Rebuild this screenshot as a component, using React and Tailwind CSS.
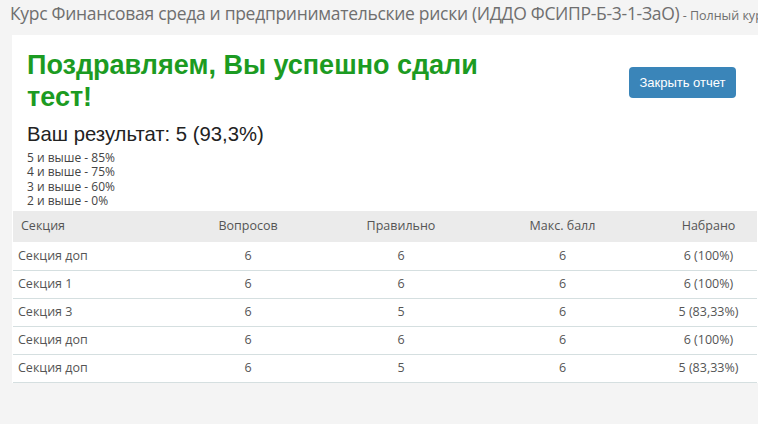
import React from "react";

const rows = [
  { name: "Секция доп", total: 6, right: 6, max: 6, score: "6 (100%)" },
  { name: "Секция 1", total: 6, right: 6, max: 6, score: "6 (100%)" },
  { name: "Секция 3", total: 6, right: 5, max: 6, score: "5 (83,33%)" },
  { name: "Секция доп", total: 6, right: 6, max: 6, score: "6 (100%)" },
  { name: "Секция доп", total: 6, right: 5, max: 6, score: "5 (83,33%)" },
];

const grades = ["5 и выше - 85%", "4 и выше - 75%", "3 и выше - 60%", "2 и выше - 0%"];

const App = () => {
  return (
    <div className="w-[758px] h-[424px] overflow-hidden bg-[#f4f4f4] font-['Open_Sans',sans-serif]">
      <div className="h-[35px] pl-[10px] pt-[1px] whitespace-nowrap text-[#6f6f6f]">
        <span className="text-[17.5px] leading-[24px] tracking-[-0.3px]">
          Курс Финансовая среда и предпринимательские риски (ИДДО ФСИПР-Б-3-1-ЗаО)
        </span>
        <span className="text-[12.5px]"> - Полный курс</span>
      </div>

      <div className="ml-3 bg-white">
        <div className="flex justify-between">
          <div className="pl-[15px] pt-[14px]">
            <h1 className="w-[500px] font-['Liberation_Sans',sans-serif] font-bold text-[27px] leading-[32px] text-[#1c9b22]">
              Поздравляем, Вы успешно сдали тест!
            </h1>
            <div className="mt-[9px] font-['Liberation_Sans',sans-serif] text-[20.3px] leading-[24px] text-[#222]">
              Ваш результат: 5 (93,3%)
            </div>
            <div className="mt-[5px] text-[12px] leading-[14.33px] text-[#444]">
              {grades.map((g, i) => (
                <div key={i}>{g}</div>
              ))}
            </div>
          </div>
          <button className="mt-[32px] mr-[22px] h-[31px] w-[107px] rounded-[4px] bg-[#3a85b9] text-white text-[13px] font-['Liberation_Sans',sans-serif]">
            Закрыть отчет
          </button>
        </div>

        <table className="mt-[3px] ml-px w-[744px] table-fixed border-collapse text-[12.5px] text-[#555]">
          <colgroup>
            <col className="w-[146px]" />
            <col className="w-[178px]" />
            <col className="w-[128px]" />
            <col className="w-[195px]" />
            <col className="w-[97px]" />
          </colgroup>
          <thead>
            <tr className="h-[31px] bg-[#ebebeb]">
              <th className="pl-2 text-left font-normal">Секция</th>
              <th className="font-normal">Вопросов</th>
              <th className="font-normal">Правильно</th>
              <th className="font-normal">Макс. балл</th>
              <th className="font-normal">Набрано</th>
            </tr>
          </thead>
          <tbody>
            {rows.map((r, i) => (
              <tr key={i} className="h-[28px] border-b border-[#d5dfe0]">
                <td className="pl-[5px]">{r.name}</td>
                <td className="text-center">{r.total}</td>
                <td className="text-center">{r.right}</td>
                <td className="text-center">{r.max}</td>
                <td className="text-center">{r.score}</td>
              </tr>
            ))}
          </tbody>
        </table>
      </div>
    </div>
  );
};

export default App;
